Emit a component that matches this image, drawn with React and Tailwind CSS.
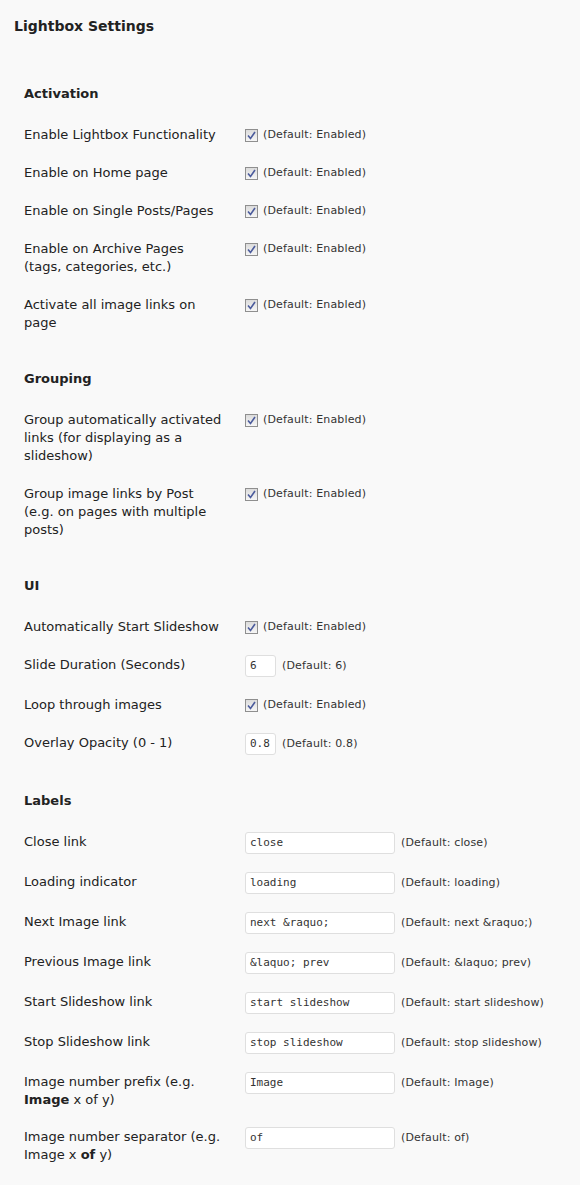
import React from "react";

const Check = () => (
  <span className="mt-[3px] flex h-[13px] w-[13px] shrink-0 items-center justify-center border border-[#8f8f8f] bg-gradient-to-b from-[#dcdcdc] to-[#f6f6f6]">
    <svg width="9" height="9" viewBox="0 0 9 9">
      <path d="M1 4.5 L3.5 7.5 L8 1" fill="none" stroke="#4b5b9c" strokeWidth="1.6" />
    </svg>
  </span>
);

const Desc = ({ children }) => (
  <span className="block text-[11px] leading-[18px] tracking-[0.15px] text-[#333]">{children}</span>
);

const Label = ({ lines, extra }) => (
  <div className={"w-[221px] shrink-0 leading-[18px] " + (extra || "")}>
    {lines.map((l, i) => (
      <div key={i}>{l}</div>
    ))}
  </div>
);

const CheckRow = ({ lines }) => (
  <div className="flex items-start py-[10px] leading-[18px]">
    <Label lines={lines} />
    <div className="flex items-start gap-[5px]">
      <Check />
      <Desc>(Default: Enabled)</Desc>
    </div>
  </div>
);

const InputRow = ({ lines, value, def, small }) => (
  <div className="flex items-start py-[9px] leading-[18px]">
    <Label lines={lines} extra="pt-[1px]" />
    <div className="flex items-center gap-[6px]">
      <div
        className={
          "flex h-[22px] items-center rounded-[3px] border border-[#dfdfdf] bg-white px-[4px] text-[11px] text-[#333] " +
          (small ? "w-[31px]" : "w-[150px]")
        }
        style={{ fontFamily: '"DejaVu Sans Mono", monospace' }}
      >
        {value}
      </div>
      <Desc>{def}</Desc>
    </div>
  </div>
);

const Heading = ({ children, first }) => (
  <div className={"mb-[13px] text-[13px] font-bold leading-[18px] text-[#222] " + (first ? "mt-[49px]" : "mt-[28px]")}>
    {children}
  </div>
);

export default function App() {
  return (
    <div
      className="min-h-[1185px] w-[580px] bg-[#f9f9f9] text-[13px] leading-[18px] text-[#222]"
      style={{ fontFamily: '"DejaVu Sans", Verdana, sans-serif' }}
    >
      <div className="pl-[14px] pt-[16px] text-[14px] font-bold leading-[20px]">Lightbox Settings</div>
      <div className="pl-[24px]">
        <Heading first>Activation</Heading>
        <CheckRow lines={["Enable Lightbox Functionality"]} />
        <CheckRow lines={["Enable on Home page"]} />
        <CheckRow lines={["Enable on Single Posts/Pages"]} />
        <CheckRow lines={["Enable on Archive Pages", "(tags, categories, etc.)"]} />
        <CheckRow lines={["Activate all image links on", "page"]} />

        <Heading>Grouping</Heading>
        <CheckRow lines={["Group automatically activated", "links (for displaying as a", "slideshow)"]} />
        <CheckRow lines={["Group image links by Post", "(e.g. on pages with multiple", "posts)"]} />

        <Heading>UI</Heading>
        <CheckRow lines={["Automatically Start Slideshow"]} />
        <InputRow lines={["Slide Duration (Seconds)"]} value="6" def="(Default: 6)" small />
        <CheckRow lines={["Loop through images"]} />
        <InputRow lines={["Overlay Opacity (0 - 1)"]} value="0.8" def="(Default: 0.8)" small />

        <Heading>Labels</Heading>
        <InputRow lines={["Close link"]} value="close" def="(Default: close)" />
        <InputRow lines={["Loading indicator"]} value="loading" def="(Default: loading)" />
        <InputRow lines={["Next Image link"]} value={"next &raquo;"} def={"(Default: next &raquo;)"} />
        <InputRow lines={["Previous Image link"]} value={"&laquo; prev"} def={"(Default: &laquo; prev)"} />
        <InputRow lines={["Start Slideshow link"]} value="start slideshow" def="(Default: start slideshow)" />
        <InputRow lines={["Stop Slideshow link"]} value="stop slideshow" def="(Default: stop slideshow)" />
        <InputRow
          lines={[
            "Image number prefix (e.g.",
            <>
              <b>Image</b> x of y)
            </>,
          ]}
          value="Image"
          def="(Default: Image)"
        />
        <InputRow
          lines={[
            "Image number separator (e.g.",
            <>
              Image x <b>of</b> y)
            </>,
          ]}
          value="of"
          def="(Default: of)"
        />
      </div>
    </div>
  );
}
